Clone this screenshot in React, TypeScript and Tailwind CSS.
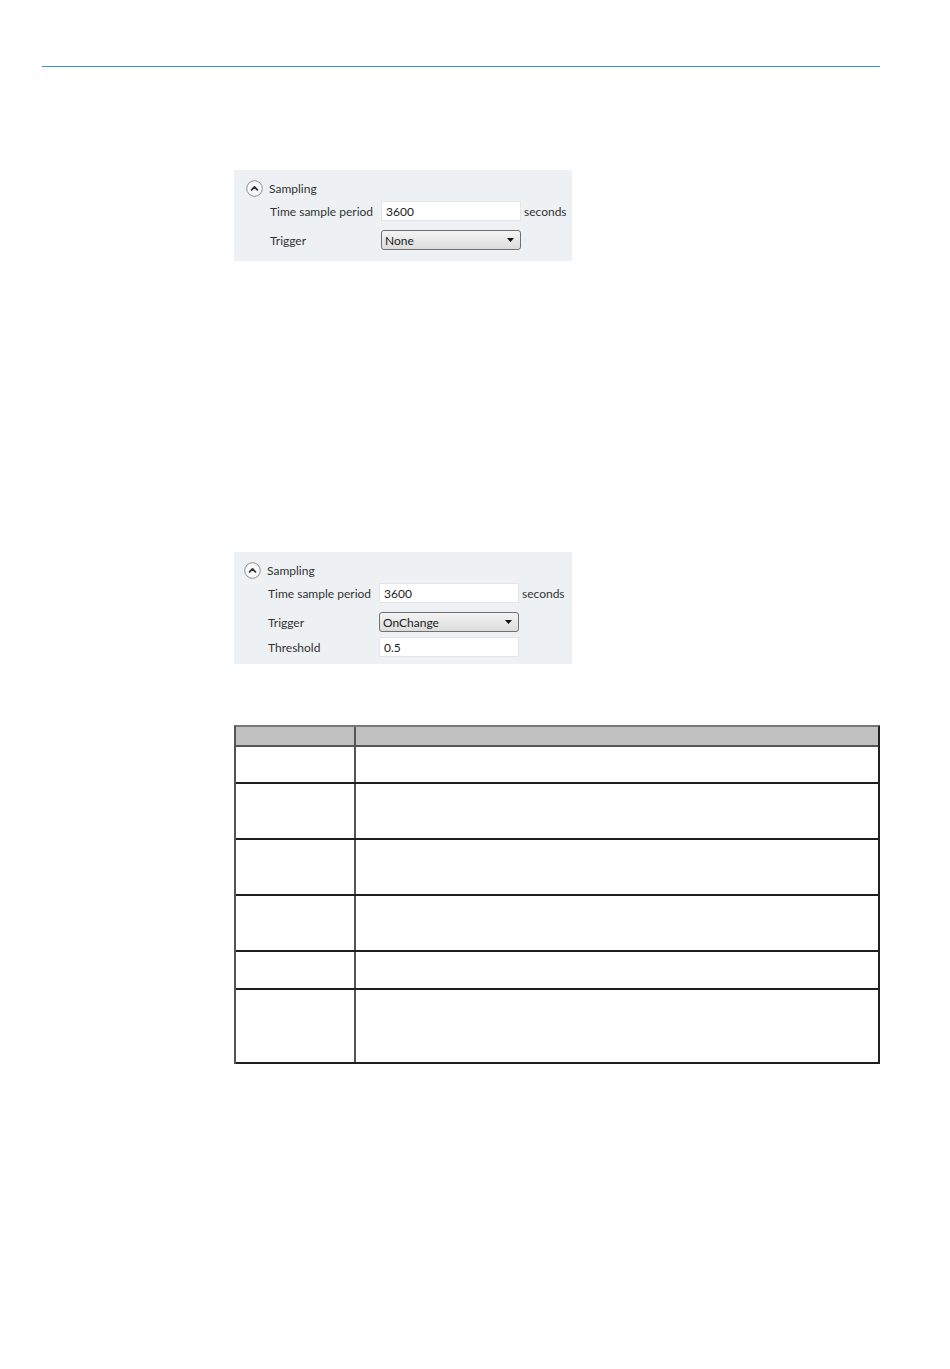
import React from 'react';

const font = { fontFamily: 'Lato, "Liberation Sans", sans-serif' };

const CollapseIcon = () => (
  <svg width="17" height="17" viewBox="0 0 17 17" className="shrink-0">
    <circle cx="8.5" cy="8.5" r="7.8" fill="#f7f8fa" stroke="#8c8c8c" strokeWidth="1" />
    <path d="M5.6 9.8 L8.5 6.9 L11.4 9.8" fill="none" stroke="#333" strokeWidth="1.8" strokeLinecap="round" strokeLinejoin="round" />
  </svg>
);

const TextBox = ({ value }: { value: string }) => (
  <div className="w-[140px] h-[20px] bg-white border border-[#e2e6ea] pl-[4px] pt-[2px] flex items-center text-[12px] text-[#222]">
    {value}
  </div>
);

const Dropdown = ({ value }: { value: string }) => (
  <div className="w-[140px] h-[20px] rounded-[3px] border border-[#707070] bg-gradient-to-b from-[#f4f4f4] to-[#dcdcdc] pl-[3px] pr-[6px] flex items-center justify-between text-[12px] text-[#222]">
    <span className="pt-[2px]">{value}</span>
    <svg width="7" height="4" viewBox="0 0 7 4">
      <path d="M0 0 H7 L3.5 4 Z" fill="#111" />
    </svg>
  </div>
);

const Row = ({ label, children, className = '' }: { label: string; children: React.ReactNode; className?: string }) => (
  <div className={`flex items-center h-[20px] ${className}`}>
    <span className="w-[111px] pt-[2px] text-[12px] text-[#333]">{label}</span>
    {children}
  </div>
);

const SamplingPanel = ({ withThreshold }: { withThreshold?: boolean }) => (
  <div
    className={`ml-[234px] w-[338px] bg-[#eef1f4] pt-[9px] ${withThreshold ? 'h-[112px] pl-[10px]' : 'h-[91px] pl-[12px]'}`}
    style={font}
  >
    <div className="flex items-center h-[18px] gap-[6px]">
      <CollapseIcon />
      <span className="pt-[2px] text-[12px] text-[#333]">Sampling</span>
    </div>
    <div className="pl-[24px]">
      <Row label="Time sample period" className="mt-[4px]">
        <TextBox value="3600" />
        <span className="ml-[3px] pt-[2px] text-[12px] text-[#333]">seconds</span>
      </Row>
      <Row label="Trigger" className="mt-[9px]">
        <Dropdown value={withThreshold ? 'OnChange' : 'None'} />
      </Row>
      {withThreshold && (
        <Row label="Threshold" className="mt-[5px]">
          <TextBox value="0.5" />
        </Row>
      )}
    </div>
  </div>
);

const rowHeights = [37, 56, 56, 56, 38, 74];

export default function App() {
  return (
    <div className="w-[950px] h-[1369px] bg-white overflow-hidden">
      <div className="h-[66px]" />
      <div className="ml-[42px] w-[838px] h-px bg-[#2a9fd6]" />

      <div className="mt-[103px]">
        <SamplingPanel />
      </div>

      <div className="mt-[291px]">
        <SamplingPanel withThreshold />
      </div>

      <div className="mt-[61px] ml-[234px] w-[646px] border-l-2 border-r-2 border-t-2 border-l-[#555] border-r-[#222] border-t-[#777]">
        <div className="flex h-[18px] bg-[#c0c0c0] border-b-2 border-[#555] box-content">
          <div className="w-[120px] border-r-2 border-[#555]" />
          <div className="flex-1" />
        </div>
        {rowHeights.map((h, i) => (
          <div
            key={i}
            className="flex border-b-2 border-[#1e1e1e]"
            style={{ height: h }}
          >
            <div className="w-[120px] border-r-2 border-[#555]" />
            <div className="flex-1" />
          </div>
        ))}
      </div>
    </div>
  );
}
